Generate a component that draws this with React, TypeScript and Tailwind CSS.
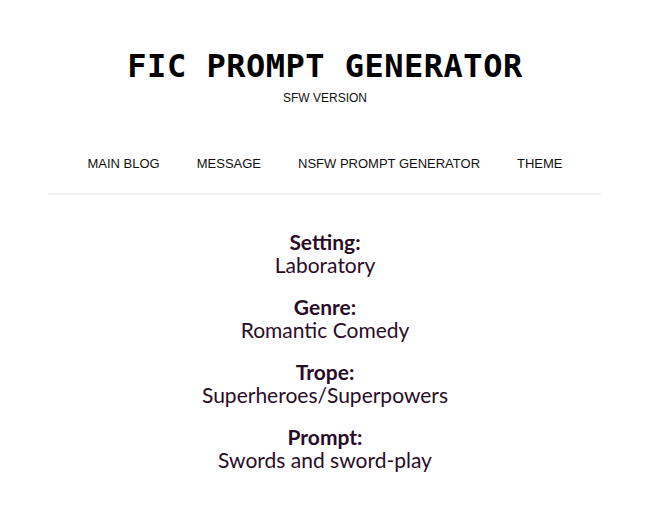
const fields = [
  { label: 'Setting:', value: 'Laboratory' },
  { label: 'Genre:', value: 'Romantic Comedy' },
  { label: 'Trope:', value: 'Superheroes/Superpowers' },
  { label: 'Prompt:', value: 'Swords and sword-play' },
];

const nav = ['MAIN BLOG', 'MESSAGE', 'NSFW PROMPT GENERATOR', 'THEME'];

export default function App() {
  return (
    <div className="min-h-screen bg-white flex flex-col items-center">
      {/* HEADER */}
      <header className="pt-[47px] flex flex-col items-center">
        <h1 className="font-['DejaVu_Sans_Mono',monospace] font-bold text-[32px] leading-[38px] text-black tracking-[0.5px]">
          FIC PROMPT GENERATOR
        </h1>
        <p className="font-['Liberation_Sans',Arial,sans-serif] text-[12px] leading-[14px] text-[#111] mt-[6px]">
          SFW VERSION
        </p>
      </header>

      {/* NAV */}
      <nav className="w-[552px] mt-[51px] border-b-2 border-[#f1f1f1] pb-[22px] flex justify-center gap-[37px]">
        {nav.map((item) => (
          <a
            key={item}
            className="font-['Liberation_Sans',Arial,sans-serif] text-[13px] leading-[15px] text-[#111] cursor-pointer"
          >
            {item}
          </a>
        ))}
      </nav>

      {/* RESULTS */}
      <main className="mt-[35px] flex flex-col items-center gap-[19px] font-['Lato',sans-serif] text-[#2a0c27] text-[21px] leading-[23px] text-center">
        {fields.map(({ label, value }) => (
          <div key={label}>
            <div className="font-bold">{label}</div>
            <div>{value}</div>
          </div>
        ))}
      </main>
    </div>
  );
}
